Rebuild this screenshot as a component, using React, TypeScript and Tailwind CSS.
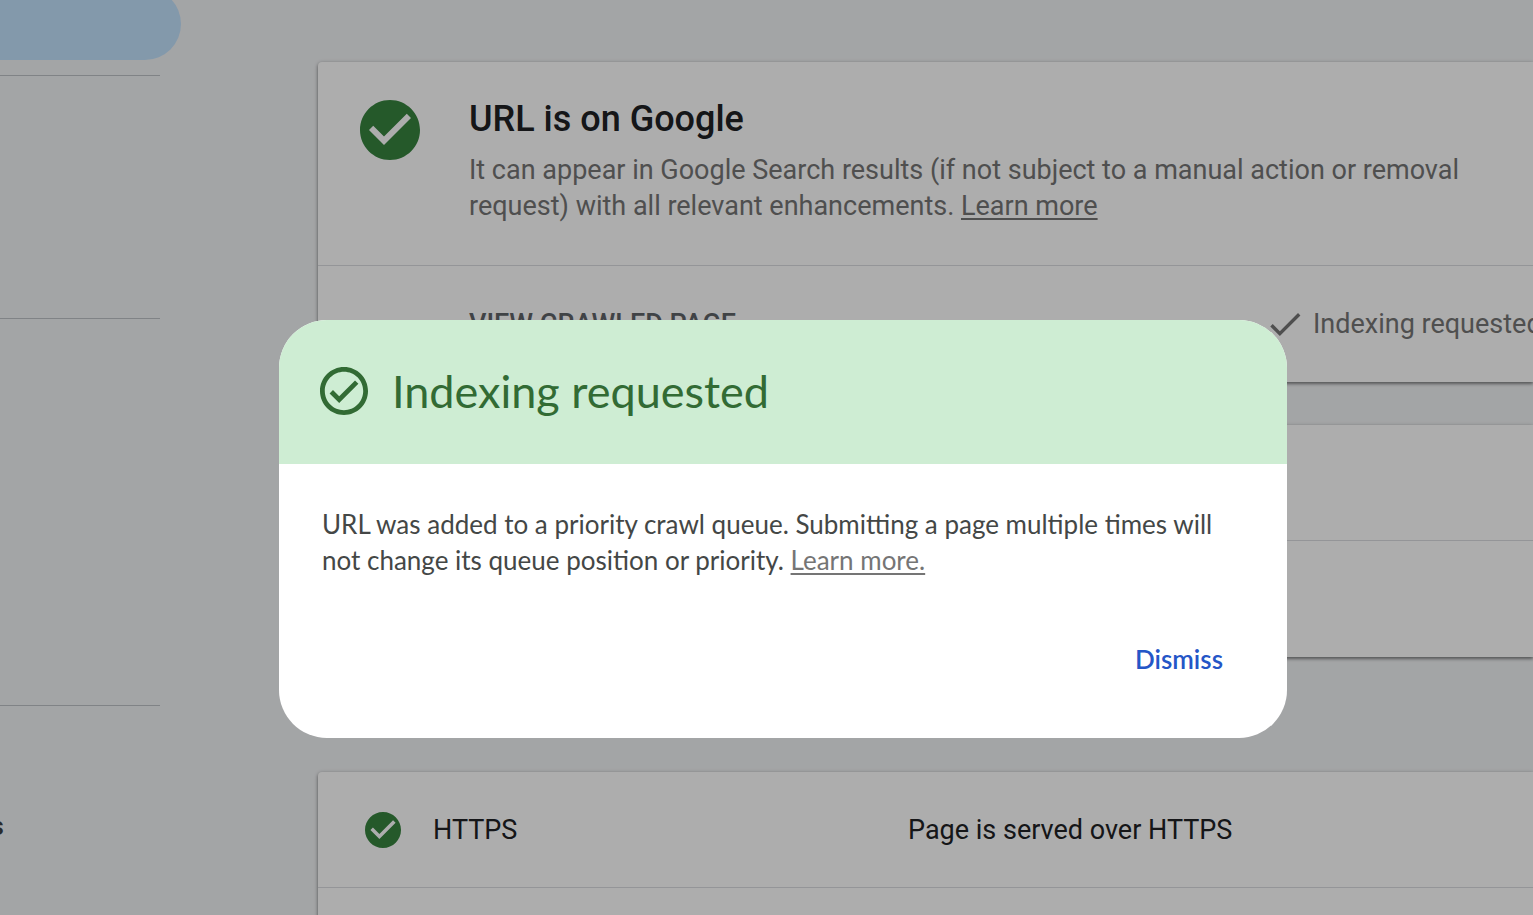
import { ReactNode } from 'react';

// ============================================
// URL inspection - indexing requested dialog
// ============================================

const CHECK_CIRCLE =
  'M12 2C6.48 2 2 6.48 2 12s4.48 10 10 10 10-4.48 10-10S17.52 2 12 2zm-2 15l-5-5 1.41-1.41L10 14.17l7.59-7.59L19 8l-9 9z';
const CHECK_OUTLINE =
  'M16.59 7.58L10 14.17l-2.59-2.58L6 13l4 4 8-8-1.41-1.42zM12 2C6.48 2 2 6.48 2 12s4.48 10 10 10 10-4.48 10-10S17.52 2 12 2zm0 18c-4.42 0-8-3.58-8-8s3.58-8 8-8 8 3.58 8 8-3.58 8-8 8z';
const CHECK = 'M9 16.17L4.83 12l-1.42 1.41L9 19 21 7l-1.41-1.41L9 16.17z';

function Icon({ path, viewBox = '2 2 20 20', className }: { path: string; viewBox?: string; className: string }) {
  return (
    <svg viewBox={viewBox} fill="currentColor" aria-hidden="true" className={`shrink-0 ${className}`}>
      <path d={path} />
    </svg>
  );
}

function Card({ children }: { children: ReactNode }) {
  return (
    <section className="rounded-l-sm bg-white shadow-[0_2px_3px_rgba(0,0,0,0.3),0_1px_4px_rgba(0,0,0,0.3)]">
      {children}
    </section>
  );
}

function Sidebar() {
  return (
    <nav className="w-[318px] shrink-0">
      <div className="-mt-3 h-18 w-[181px] rounded-r-full bg-[#c2e2fd]" />
      <div className="mt-[15px] h-[243px] w-40 border-t border-[#bdc1c6]" />
      <div className="h-[387px] w-40 border-t border-[#bdc1c6]" />
      <div className="w-40 border-t border-[#bdc1c6] pt-[102px]">
        <div className="flex w-1 justify-end overflow-hidden text-[26px] leading-9 font-medium text-[#3c4043]">s</div>
      </div>
    </nav>
  );
}

function Results() {
  return (
    <main className="min-w-0 flex-1 pt-[62px]">
      <Card>
        <div className="flex gap-[49px] pt-9 pr-16 pb-[41px] pl-[42px]">
          <Icon path={CHECK_CIRCLE} className="mt-0.5 size-15 text-[#37833f]" />
          <div>
            <h1 className="text-4xl leading-[42px] font-medium text-[#202124]">URL is on Google</h1>
            <p className="mt-3 text-[27px] leading-9 text-[#757575]">
              It can appear in Google Search results (if not subject to a manual action or removal request) with all
              relevant enhancements.{' '}
              <a href="#" className="underline underline-offset-3">
                Learn more
              </a>
            </p>
          </div>
        </div>
        <div className="flex h-[117px] items-center justify-between border-t border-[#dadce0] pl-[151px]">
          <button className="text-[27px] leading-9 font-medium text-[#5f6368]">VIEW CRAWLED PAGE</button>
          <div className="flex w-[264px] shrink-0 items-center gap-3 text-[27px] leading-9 whitespace-nowrap text-[#757575]">
            <Icon path={CHECK} viewBox="3 5 18 14" className="h-6 w-8" />
            Indexing requested
          </div>
        </div>
      </Card>

      <div className="mt-[43px]">
        <Card>
          <div className="h-[115px]" />
          <div className="h-[117px] border-t border-[#dadce0]" />
        </Card>
      </div>

      <div className="mt-[115px]">
        <Card>
          <div className="flex h-[115px] items-center pl-[47px] text-[27px] leading-9 text-[#202124]">
            <Icon path={CHECK_CIRCLE} className="size-9 text-[#37833f]" />
            <span className="ml-8 w-[475px] shrink-0">HTTPS</span>
            <span>Page is served over HTTPS</span>
          </div>
          <div className="h-[115px] border-t border-[#dadce0]" />
        </Card>
      </div>
    </main>
  );
}

function Dialog() {
  return (
    <div className="fixed inset-0 flex items-start justify-center bg-black/32 pt-80 pl-[33px] font-['Lato',sans-serif]">
      <div
        role="dialog"
        aria-labelledby="dialog-title"
        className="w-full max-w-[1008px] overflow-hidden rounded-[48px] bg-white"
      >
        <div className="flex h-36 items-center gap-6 bg-[#ceedd3] pb-0.5 pl-[41px] text-[#326b34]">
          <Icon path={CHECK_OUTLINE} className="size-12" />
          <h2 id="dialog-title" className="text-[45px] leading-[52px]">
            Indexing requested
          </h2>
        </div>
        <p className="px-[43px] pt-[42px] text-[26px] leading-9 text-[#444746]">
          URL was added to a priority crawl queue. Submitting a page multiple times will not change its queue position
          or priority.{' '}
          <a href="#" className="text-[#757575] underline underline-offset-3">
            Learn more.
          </a>
        </p>
        <div className="flex justify-end px-16 pt-[63px] pb-[61px]">
          <button className="text-[26px] leading-9 font-semibold text-[#2456c7]">Dismiss</button>
        </div>
      </div>
    </div>
  );
}

export default function App() {
  return (
    <div className="h-screen overflow-hidden bg-[#f1f3f5] font-['Roboto',sans-serif]">
      <div className="flex">
        <Sidebar />
        <Results />
      </div>
      <Dialog />
    </div>
  );
}
